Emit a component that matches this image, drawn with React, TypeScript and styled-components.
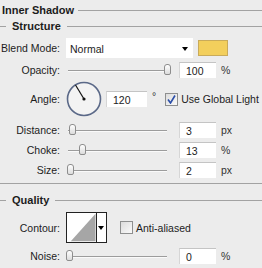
import styled, { createGlobalStyle } from 'styled-components';

const GlobalStyle = createGlobalStyle`
  body {
    margin: 0;
    background: #ececec;
  }
`;

// Whole dialog section
const Panel = styled.div`
  width: 262px;
  height: 268px;
  background: #ececec;
  font-family: 'Liberation Sans', Arial, sans-serif;
  font-size: 10.5px;
  color: #1c1c1c;
  display: flex;
  flex-direction: column;
  overflow: hidden;
`;

const Line = styled.div`
  flex: 1;
  height: 1px;
  background: #a2a2a2;
`;

const Title = styled.div`
  height: 20px;
  display: flex;
  align-items: center;
  gap: 4px;
  padding-left: 2px;
  font-weight: bold;
  font-size: 11px;
`;

const GroupHeader = styled.div<{ $top: number }>`
  height: 12px;
  margin-top: ${(p) => p.$top}px;
  display: flex;
  align-items: center;
  font-weight: bold;
  font-size: 11px;
  gap: 6px;

  &::before {
    content: '';
    width: 6px;
    height: 1px;
    background: #a2a2a2;
  }
`;

const Divider = styled.div`
  margin-top: 5px;
  height: 1px;
  background: #a2a2a2;
`;

// label column + controls
const Row = styled.div<{ $top: number; $h: number }>`
  margin-top: ${(p) => p.$top}px;
  height: ${(p) => p.$h}px;
  display: grid;
  grid-template-columns: 60px 1fr;
  column-gap: 6px;
  align-items: center;
`;

const Label = styled.div`
  text-align: right;
  white-space: nowrap;
`;

const Controls = styled.div`
  display: flex;
  align-items: center;
  height: 100%;
`;

const Select = styled.div`
  width: 127px;
  height: 20px;
  background: #fff;
  box-sizing: border-box;
  display: flex;
  align-items: center;
  justify-content: space-between;
  padding: 1px 5px 0 4px;
`;

const Arrow = styled.span`
  width: 0;
  height: 0;
  border-left: 3.5px solid transparent;
  border-right: 3.5px solid transparent;
  border-top: 4px solid #000;
`;

const Swatch = styled.div`
  width: 30px;
  height: 16px;
  margin-left: 5px;
  box-sizing: border-box;
  background: #f3cf5c;
  border: 1px solid #c9ab5a;
`;

const SliderBox = styled.div`
  position: relative;
  width: 104px;
  height: 14px;
`;

const Track = styled.div`
  position: absolute;
  left: 2px;
  right: 3px;
  top: 7px;
  height: 1px;
  background: #9c9c9c;
  border-bottom: 1px solid #fafafa;
`;

const Thumb = styled.div`
  position: absolute;
  top: 1px;
  width: 7px;
  height: 11px;
  box-sizing: border-box;
  border: 1px solid #8d8d8d;
  border-radius: 3px 3px 2px 2px;
  background: linear-gradient(#ffffff, #dcdcdc);
`;

const Field = styled.div<{ $w?: number; $ml?: number }>`
  width: ${(p) => p.$w ?? 37}px;
  height: 16px;
  margin-left: ${(p) => p.$ml ?? 9}px;
  box-sizing: border-box;
  background: #fff;
  border-top: 1px solid #c4c4c4;
  border-left: 1px solid #d6d6d6;
  display: flex;
  align-items: center;
  padding-left: 6px;
`;

const Unit = styled.span<{ $raised?: boolean }>`
  margin-left: 5px;
  margin-top: ${(p) => (p.$raised ? -6 : 0)}px;
  color: #333;
`;

const Check = styled.div<{ $ml: number }>`
  width: 13px;
  height: 13px;
  margin-left: ${(p) => p.$ml}px;
  box-sizing: border-box;
  border: 1px solid #8e8f8f;
  background: linear-gradient(135deg, #dcdcdc, #fafafa);
  display: flex;
  align-items: center;
  justify-content: center;
`;

const CheckLabel = styled.span`
  margin-left: 3px;
  white-space: nowrap;
`;

const ContourBox = styled.div`
  width: 41px;
  height: 31px;
  box-sizing: border-box;
  border: 1px solid #222;
  display: flex;
  background: #fff;
`;

const ContourArrow = styled.div`
  width: 10px;
  border-left: 1px solid #222;
  display: flex;
  align-items: center;
  justify-content: center;
`;

const Slider = ({ pct }: { pct: number }) => (
  <SliderBox>
    <Track />
    <Thumb style={{ left: `${Math.round(pct * 98)}px` }} />
  </SliderBox>
);

const SliderRow = ({
  label,
  pct,
  value,
  unit,
  top,
}: {
  label: string;
  pct: number;
  value: string;
  unit: string;
  top: number;
}) => (
  <Row $top={top} $h={16}>
    <Label>{label}</Label>
    <Controls>
      <Slider pct={pct} />
      <Field>{value}</Field>
      <Unit>{unit}</Unit>
    </Controls>
  </Row>
);

const Dial = () => (
  <svg width="36" height="36" viewBox="0 0 36 36">
    <circle cx="18" cy="18" r="16.5" fill="#f3f3f3" stroke="#5b6988" strokeWidth="1.6" />
    <line x1="18" y1="18" x2="9.5" y2="4" stroke="#111" strokeWidth="1.2" />
    <circle cx="18" cy="18" r="1.6" fill="#111" />
  </svg>
);

const App = () => {
  return (
    <>
      <GlobalStyle />
      <Panel>
        <Title>
          Inner Shadow
          <Line />
        </Title>
        <GroupHeader $top={0}>
          Structure
          <Line />
        </GroupHeader>

        <Row $top={6} $h={20}>
          <Label>Blend Mode:</Label>
          <Controls>
            <Select>
              Normal
              <Arrow />
            </Select>
            <Swatch />
          </Controls>
        </Row>

        <SliderRow label="Opacity:" pct={1} value="100" unit="%" top={4} />

        <Row $top={3} $h={35}>
          <Label>Angle:</Label>
          <Controls>
            <Dial />
            <Field $w={41} $ml={4}>
              120
            </Field>
            <Unit $raised>°</Unit>
            <Check $ml={9}>
              <svg width="9" height="9" viewBox="0 0 9 9">
                <path d="M1 4.5 L3.5 8 L8 0.5" fill="none" stroke="#2b4ea8" strokeWidth="1.6" />
              </svg>
            </Check>
            <CheckLabel>Use Global Light</CheckLabel>
          </Controls>
        </Row>

        <SliderRow label="Distance:" pct={0.03} value="3" unit="px" top={6} />
        <SliderRow label="Choke:" pct={0.13} value="13" unit="%" top={4} />
        <SliderRow label="Size:" pct={0.01} value="2" unit="px" top={4} />

        <Divider />

        <GroupHeader $top={10}>
          Quality
          <Line />
        </GroupHeader>

        <Row $top={6} $h={31}>
          <Label>Contour:</Label>
          <Controls>
            <ContourBox>
              <svg width="30" height="29" viewBox="0 0 30 29">
                <polygon points="4,29 30,0 30,29" fill="#a6a6a6" />
              </svg>
              <ContourArrow>
                <Arrow />
              </ContourArrow>
            </ContourBox>
            <Check $ml={13} />
            <CheckLabel>Anti-aliased</CheckLabel>
          </Controls>
        </Row>

        <SliderRow label="Noise:" pct={0} value="0" unit="%" top={5} />
      </Panel>
    </>
  );
};

export default App;
